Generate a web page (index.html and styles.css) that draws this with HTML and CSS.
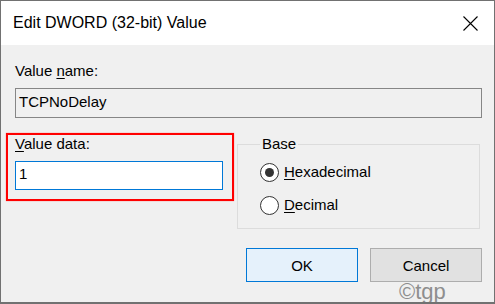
FILE: index.html
```html
<!DOCTYPE html>
<html lang="en">
<head>
  <meta charset="UTF-8" />
  <title>Edit DWORD (32-bit) Value</title>
  <link rel="stylesheet" href="styles.css">
</head>
<body>

  <div class="window">
    <!-- Title bar -->
    <div class="titlebar">
      <span class="title">Edit DWORD (32-bit) Value</span>
      <svg class="close" width="15" height="15" viewBox="0 0 15 15">
        <path d="M0.5 0.5 L14.5 14.5 M14.5 0.5 L0.5 14.5" stroke="#000" stroke-width="1.1" fill="none"/>
      </svg>
    </div>

    <div class="content">
      <div class="label first">Value <u>n</u>ame:</div>
      <div class="textbox readonly">TCPNoDelay</div>

      <div class="row">
        <div class="data-group">
          <div class="label"><u>V</u>alue data:</div>
          <div class="textbox active">1</div>
        </div>

        <fieldset class="base">
          <legend>Base</legend>
          <div class="radio">
            <span class="dot checked"></span>
            <span><u>H</u>exadecimal</span>
          </div>
          <div class="radio">
            <span class="dot"></span>
            <span><u>D</u>ecimal</span>
          </div>
        </fieldset>
      </div>

      <div class="buttons">
        <button class="btn default">OK</button>
        <button class="btn">Cancel</button>
      </div>
    </div>

    <div class="watermark">©tgp</div>
  </div>

</body>
</html>
```

FILE: styles.css
```css
body {
  margin: 0;
  background: #f0f0f0;
  font-family: 'Liberation Sans', Arial, sans-serif;
  color: #000;
}

.window {
  position: relative;
  width: 495px;
  height: 304px;
  box-sizing: border-box;
  border: 1px solid #717171;
  border-bottom-width: 2px;
  background: #f0f0f0;
  overflow: hidden;
}

.titlebar {
  height: 44px;
  background: #ffffff;
  display: flex;
  align-items: center;
  justify-content: space-between;
  padding: 0 16px 0 12px;
}

.title {
  font-size: 16px;
}

.content {
  padding: 17px 12px 0 14px;
  font-size: 15px;
  line-height: 18px;
}

.label.first {
  margin-bottom: 8px;
}

.label {
  margin-bottom: 8px;
}

u {
  text-underline-offset: 2px;
}

.textbox {
  box-sizing: border-box;
  height: 30px;
  padding: 4px 3px;
  border: 1px solid #868686;
}

.textbox.readonly {
  background: #f0f0f0;
}

.textbox.active {
  height: 29px;
  padding: 3px 3px;
  background: #ffffff;
  border-color: #0078d7;
}

.row {
  display: flex;
  align-items: flex-start;
  margin-top: 17px;
}

.data-group {
  position: relative;
  width: 208px;
  flex: none;
}

/* red highlight drawn round the field */
.data-group::after {
  content: '';
  position: absolute;
  top: -2px;
  left: -9px;
  right: -11px;
  bottom: -11px;
  border: 2px solid #ff0000;
  box-shadow: 0 0 1px #ff6b6b;
  pointer-events: none;
}

.base {
  margin: 0 0 0 14px;
  width: 243px;
  box-sizing: border-box;
  border: 1px solid #dcdcdc;
  padding: 8px 8px 12px 22px;
  min-inline-size: 0;
}

.base legend {
  padding: 0 2px;
  margin-left: 0;
  line-height: 18px;
}

.radio {
  display: flex;
  align-items: center;
  height: 22px;
  gap: 5px;
}

.radio + .radio {
  margin-top: 11px;
}

.dot {
  position: relative;
  width: 19px;
  height: 19px;
  box-sizing: border-box;
  border: 1px solid #333;
  border-radius: 50%;
  background: #fff;
}

.dot.checked::before {
  content: '';
  position: absolute;
  left: 4px;
  top: 4px;
  width: 9px;
  height: 9px;
  border-radius: 50%;
  background: #333;
}

.buttons {
  display: flex;
  justify-content: flex-end;
  gap: 12px;
  margin-top: 19px;
}

.btn {
  width: 112px;
  height: 34px;
  font-family: 'Liberation Sans', Arial, sans-serif;
  font-size: 15px;
  color: #000;
  background: #e1e1e1;
  border: 1px solid #adadad;
  border-radius: 0;
  padding: 0;
}

.btn.default {
  background: #e5f1fb;
  border-color: #0078d7;
}

.watermark {
  position: absolute;
  left: 398px;
  top: 278px;
  font-size: 22px;
  line-height: 26px;
  color: #8e8e8e;
}
```
